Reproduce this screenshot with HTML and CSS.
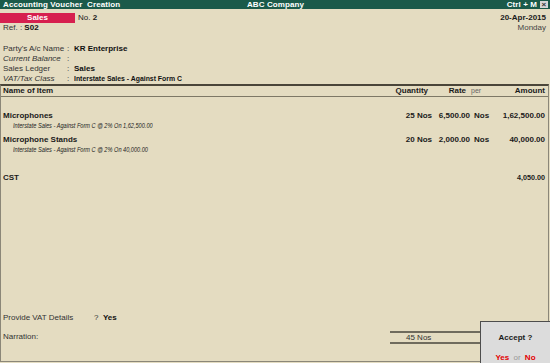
FILE: index.html
```html
<!DOCTYPE html>
<html lang="en">
<head>
  <meta charset="UTF-8">
  <title>Accounting Voucher Creation</title>
  <link rel="stylesheet" href="styles.css">
</head>
<body>

<div class="titlebar">
  <span class="title-left">Accounting Voucher&nbsp; Creation</span>
  <span class="title-center">ABC Company</span>
  <span class="title-right">Ctrl + M <span class="close-box">&#215;</span></span>
</div>

<div class="voucher-head">
  <div class="head-left">
    <div class="head-row">
      <span class="vtype">Sales</span>
      <span class="vno">No. <b>2</b></span>
    </div>
    <div class="head-row ref">Ref. :&nbsp; <b>S02</b></div>
  </div>
  <div class="head-right">
    <div class="date">20-Apr-2015</div>
    <div class="day">Monday</div>
  </div>
</div>

<div class="party">
  <div class="party-row"><span>Party's A/c Name</span><span>:</span><b>KR Enterprise</b></div>
  <div class="party-row"><i>Current Balance</i><span>:</span><span></span></div>
  <div class="party-row"><span>Sales Ledger</span><span>:</span><b>Sales</b></div>
  <div class="party-row"><i>VAT/Tax Class</i><span>:</span><b class="narrow">Interstate Sales - Against Form C</b></div>
</div>

<div class="items-frame">
  <div class="line item-head">
    <span>Name of Item</span>
    <span class="num pad-r">Quantity</span>
    <span class="num pad-r">Rate</span>
    <span class="per-head">per</span>
    <span class="num">Amount</span>
  </div>

  <div class="item-body">
    <div class="item">
      <div class="line bold">
        <span>Microphones</span>
        <span class="num">25 Nos</span>
        <span class="num">6,500.00</span>
        <span class="per">Nos</span>
        <span class="num">1,62,500.00</span>
      </div>
      <div class="sub"><span>Interstate Sales - Against Form C @ 2% On 1,62,500.00</span></div>
    </div>

    <div class="item">
      <div class="line bold">
        <span>Microphone Stands</span>
        <span class="num">20 Nos</span>
        <span class="num">2,000.00</span>
        <span class="per">Nos</span>
        <span class="num">40,000.00</span>
      </div>
      <div class="sub"><span>Interstate Sales - Against Form C @ 2% On 40,000.00</span></div>
    </div>

    <div class="line bold tax">
      <span>CST</span>
      <span></span>
      <span></span>
      <span></span>
      <span class="num narrow-r">4,050.00</span>
    </div>
  </div>

  <div class="footer">
    <div class="vat-row">
      <span>Provide VAT Details</span>
      <span>?&nbsp; <b>Yes</b></span>
    </div>
    <div class="narration-row">
      <span>Narration:</span>
      <div class="total-qty">45 Nos</div>
    </div>
  </div>
</div>

<div class="accept">
  <div class="accept-title">Accept ?</div>
  <div class="accept-choice"><b class="red">Yes</b> <span class="or">or</span> <b class="red">No</b></div>
</div>

</body>
</html>
```

FILE: styles.css
```css
/* Tally voucher screen */
body {
  margin: 0;
  width: 550px;
  height: 363px;
  overflow: hidden;
  position: relative;
  background: #e4dcc1;
  font-family: "Liberation Sans", Arial, sans-serif;
  font-size: 8px;
  color: #1a1a1a;
}
b {
  font-weight: bold;
}
.titlebar {
  height: 9px;
  line-height: 9px;
  background: #1b5a4a;
  color: #fff;
  font-weight: bold;
  display: grid;
  grid-template-columns: 1fr auto 1fr;
  padding: 0 2px 0 3px;
  letter-spacing: 0.1px;
}
.title-right {
  justify-self: end;
  display: flex;
  align-items: center;
  gap: 3px;
}
.close-box {
  width: 8px;
  height: 7px;
  background: #d6d6d6;
  color: #333;
  font-size: 8px;
  line-height: 7px;
  text-align: center;
}
.voucher-head {
  display: flex;
  justify-content: space-between;
  margin-top: 4px;
  padding-right: 4px;
}
.head-row {
  height: 10px;
  line-height: 10px;
  display: flex;
}
.vtype {
  width: 75px;
  background: #d6204f;
  color: #fff;
  font-weight: bold;
  text-align: center;
}
.vno {
  margin-left: 3px;
}
.ref {
  padding-left: 3px;
  color: #333;
}
.ref b {
  color: #111;
}
.head-right {
  text-align: right;
  line-height: 10px;
}
.date {
  font-weight: bold;
}
.day {
  color: #444;
}
.party {
  margin-top: 11px;
  padding-left: 3px;
  height: 40px;
}
.party-row {
  display: grid;
  grid-template-columns: 64px 7px 1fr;
  height: 10px;
  line-height: 10px;
  color: #333;
}
.party-row b {
  color: #111;
}
.narrow {
  transform: scaleX(0.86);
  transform-origin: left center;
  white-space: nowrap;
}
.narrow-r {
  transform: scaleX(0.9);
  transform-origin: right center;
}
.items-frame {
  width: 549px;
  height: 278px;
  box-sizing: border-box;
  border: 1px solid #8b8778;
  border-top: 2px solid #4a4539;
  display: flex;
  flex-direction: column;
}
.line {
  display: grid;
  grid-template-columns: 1fr 50px 38px 30px 45px;
  padding: 0 3px 0 2px;
  height: 10px;
  line-height: 10px;
  white-space: nowrap;
}
.num {
  text-align: right;
}
.item-head {
  height: 11px;
  box-sizing: border-box;
  border-bottom: 1px solid #7d7866;
  font-weight: bold;
}
.pad-r {
  padding-right: 4px;
}
.per-head {
  padding-left: 1px;
  font-weight: normal;
  color: #666;
  font-size: 7px;
}
.per {
  padding-left: 4px;
}
.bold {
  font-weight: bold;
}
.item-body {
  padding-top: 14px;
}
.item {
  margin-bottom: 5px;
}
.sub {
  height: 9px;
  line-height: 9px;
  padding-left: 12px;
  font-style: italic;
  font-size: 7px;
  color: #222;
  white-space: nowrap;
}
.sub span {
  display: inline-block;
  transform: scaleX(0.8);
  transform-origin: left center;
}
.tax {
  margin-top: 19px;
}
.footer {
  margin-top: auto;
  padding: 0 0 19px 2px;
  color: #333;
}
.vat-row {
  display: grid;
  grid-template-columns: 91px auto;
  justify-content: start;
  height: 10px;
  line-height: 10px;
  margin-bottom: 9px;
}
.vat-row b {
  color: #111;
}
.narration-row {
  display: flex;
  align-items: center;
  height: 10px;
  line-height: 10px;
}
.total-qty {
  margin-left: auto;
  margin-right: 63px;
  width: 95px;
  height: 13px;
  line-height: 9px;
  box-sizing: border-box;
  border-top: 2px solid #6f6b5d;
  border-bottom: 2px solid #6f6b5d;
  padding-left: 16px;
  color: #333;
}
.accept {
  position: absolute;
  left: 480px;
  top: 321px;
  width: 70px;
  height: 42px;
  box-sizing: border-box;
  border: 1px solid #4d4d4d;
  border-right: none;
  border-bottom: none;
  background: #dcdcdc;
  text-align: center;
  padding-top: 11px;
}
.accept-title {
  height: 10px;
  line-height: 10px;
  font-weight: bold;
}
.accept-choice {
  margin-top: 10px;
  height: 10px;
  line-height: 10px;
}
.red {
  color: #e30000;
}
.or {
  color: #999;
  padding: 0 2px;
}
```
